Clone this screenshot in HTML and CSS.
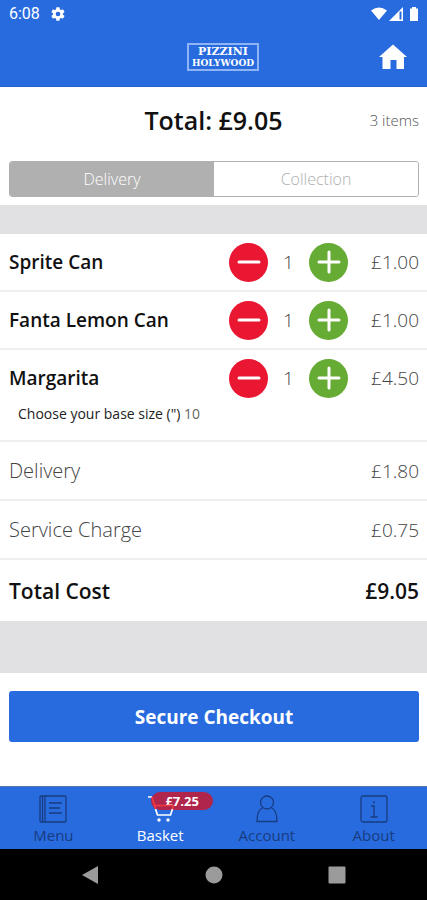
FILE: index.html
```html
<!DOCTYPE html>
<html lang="en">
<head>
    <meta charset="UTF-8">
    <meta name="viewport" content="width=device-width, initial-scale=1.0">
    <title>Basket | Pizzini Holywood</title>
    <link rel="stylesheet" href="styles.css">
</head>
<body>
    <header class="header">
        <div class="status-bar">
            <span class="time">6:08</span>
            <svg class="gear" viewBox="0 0 24 24" width="16" height="16"><path fill="#fff" d="M19.4 13a7.5 7.5 0 0 0 0-2l2.1-1.6a.5.5 0 0 0 .1-.7l-2-3.4a.5.5 0 0 0-.6-.2l-2.5 1a7.3 7.3 0 0 0-1.7-1l-.4-2.6a.5.5 0 0 0-.5-.5h-4a.5.5 0 0 0-.5.5L9 5.1a7.3 7.3 0 0 0-1.7 1l-2.5-1a.5.5 0 0 0-.6.2l-2 3.4a.5.5 0 0 0 .1.7L4.5 11a7.5 7.5 0 0 0 0 2l-2.2 1.6a.5.5 0 0 0-.1.7l2 3.4c.1.2.4.3.6.2l2.5-1a7.3 7.3 0 0 0 1.7 1l.4 2.6c0 .3.2.5.5.5h4c.3 0 .5-.2.5-.5l.4-2.6a7.3 7.3 0 0 0 1.7-1l2.5 1c.2.1.5 0 .6-.2l2-3.4a.5.5 0 0 0-.1-.7zM12 15.500a3.5 3.5 0 1 1 0-7 3.5 3.5 0 0 1 0 7z"/></svg>
            <svg class="signals" viewBox="0 0 50 16" width="50" height="16">
                <path fill="#fff" d="M0 4.500Q8 -1.500 16 4.500L8 14z"/>
                <path fill="#fff" d="M32 1v14H18z"/>
                <path fill="#286bdf" d="M28.500 5.500h2v8h-2z"/>
                <path fill="#fff" d="M41 1h4v1.500h2V15h-8V2.500h2z"/>
            </svg>
        </div>
        <div class="toolbar">
            <div class="logo">
                <span class="logo-top">PIZZINI</span>
                <span class="logo-bottom">HOLYWOOD</span>
            </div>
            <a href="#" class="home" aria-label="Home">
                <svg viewBox="0 0 28 26" width="28" height="26"><path fill="#fff" d="M14 .5 28 13h-3v12h-7.500v-9h-6v9H3.500V13H0z"/></svg>
            </a>
        </div>
    </header>

    <main class="basket">
        <div class="summary">
            <h1>Total: £9.05</h1>
            <span class="count">3 items</span>
        </div>

        <div class="toggle">
            <button class="active" aria-pressed="true">Delivery</button>
            <button aria-pressed="false">Collection</button>
        </div>

        <div class="band"></div>

        <div class="item">
            <div class="row">
                <span class="name">Sprite Can</span>
                <button class="round minus" aria-label="Remove one Sprite Can"><svg viewBox="0 0 24 24" width="24" height="24"><path d="M2 12h20"/></svg></button>
                <span class="qty">1</span>
                <button class="round plus" aria-label="Add one Sprite Can"><svg viewBox="0 0 24 24" width="24" height="24"><path d="M2 12h20M12 2v20"/></svg></button>
                <span class="price">£1.00</span>
            </div>
        </div>
        <div class="item">
            <div class="row">
                <span class="name">Fanta Lemon Can</span>
                <button class="round minus" aria-label="Remove one Fanta Lemon Can"><svg viewBox="0 0 24 24" width="24" height="24"><path d="M2 12h20"/></svg></button>
                <span class="qty">1</span>
                <button class="round plus" aria-label="Add one Fanta Lemon Can"><svg viewBox="0 0 24 24" width="24" height="24"><path d="M2 12h20M12 2v20"/></svg></button>
                <span class="price">£1.00</span>
            </div>
        </div>
        <div class="item">
            <div class="row">
                <span class="name">Margarita</span>
                <button class="round minus" aria-label="Remove one Margarita"><svg viewBox="0 0 24 24" width="24" height="24"><path d="M2 12h20"/></svg></button>
                <span class="qty">1</span>
                <button class="round plus" aria-label="Add one Margarita"><svg viewBox="0 0 24 24" width="24" height="24"><path d="M2 12h20M12 2v20"/></svg></button>
                <span class="price">£4.50</span>
            </div>
            <p class="option">Choose your base size (") <span>10</span></p>
        </div>

        <div class="charge"><span>Delivery</span><span class="price">£1.80</span></div>
        <div class="charge"><span>Service Charge</span><span class="price">£0.75</span></div>
        <div class="charge total"><span>Total Cost</span><span>£9.05</span></div>

        <div class="band band-large"></div>

        <button class="checkout">Secure Checkout</button>
    </main>

    <nav class="tabs">
        <a href="#">
            <svg viewBox="0 0 28 28" width="28" height="28" fill="none" stroke="#173c80" stroke-width="1.3"><rect x="1" y="1" width="26" height="26" rx="1"/><path d="M3.500 1v26M6 1v26M10 8h13M10 13h11M10 18h13"/></svg>
            <span>Menu</span>
        </a>
        <a href="#" class="active">
            <svg viewBox="0 0 28 28" width="28" height="28" fill="none" stroke="#fff" stroke-width="1.7"><path d="M2 2h4M9.500 14l2 6h13l2-6"/><path stroke="#f03a40" d="M6 2l3.500 12M8 10.500h19.500l-1 3.500"/><circle cx="13" cy="25" r="1.7" fill="#fff" stroke="none"/><circle cx="22" cy="25" r="1.7" fill="#fff" stroke="none"/></svg>
            <span>Basket</span>
            <span class="badge">£7.25</span>
        </a>
        <a href="#">
            <svg viewBox="0 0 28 28" width="28" height="28" fill="none" stroke="#173c80" stroke-width="1.3"><circle cx="14" cy="7.500" r="6.500"/><path d="M9.500 13C5.500 14.500 4 18.500 4 26.500h20c0-8-1.500-12-5.500-13.500"/></svg>
            <span>Account</span>
        </a>
        <a href="#">
            <svg viewBox="0 0 28 28" width="28" height="28" fill="none" stroke="#173c80" stroke-width="1.3"><rect x="1" y="1" width="26" height="26" rx="2"/><path d="M11 11h3v11M10.500 22h7M14 6v2.500"/></svg>
            <span>About</span>
        </a>
    </nav>

    <div class="system-bar">
        <svg viewBox="0 0 18 20" width="18" height="20"><path fill="#9b9b9b" d="M17 1v18L1 10z"/></svg>
        <svg viewBox="0 0 18 18" width="18" height="18"><circle cx="9" cy="9" r="8.500" fill="#9b9b9b"/></svg>
        <svg viewBox="0 0 18 18" width="18" height="18"><rect x=".5" y=".5" width="17" height="17" rx="1" fill="#9b9b9b"/></svg>
    </div>
</body>
</html>
```
FILE: styles.css
```css
* {
    margin: 0;
    padding: 0;
    box-sizing: border-box;
}

body {
    display: flex;
    flex-direction: column;
    min-height: 100vh;
    background: #fff;
    color: #111;
    font-family: 'Open Sans', 'Noto Sans', sans-serif;
    font-size: 19px;
    line-height: 24px;
}

a {
    color: inherit;
    text-decoration: none;
}

button {
    border: none;
    font-family: inherit;
    cursor: pointer;
}

svg {
    display: block;
}

.header {
    background: #286bdf;
    color: #fff;
    border-bottom: 1px solid #2060d0;
}

.status-bar {
    display: flex;
    align-items: center;
    height: 28px;
    padding-left: 9px;
}

.time {
    font-family: Roboto, sans-serif;
    font-size: 16px;
}

.gear {
    margin-left: 10px;
}

.signals {
    margin-left: auto;
    margin-right: 6px;
}

.toolbar {
    display: grid;
    grid-template-columns: 1fr auto 1fr;
    align-items: center;
    height: 58px;
    padding: 0 20px 0 39px;
}

.logo {
    grid-column: 2;
    display: flex;
    flex-direction: column;
    align-items: center;
    width: 72px;
    padding: 1px 0;
    border: 2px solid #8fb4f5;
    font-family: 'DejaVu Serif', serif;
    font-weight: bold;
}

.logo-top {
    font-size: 11px;
    line-height: 12px;
}

.logo-bottom {
    font-size: 9px;
    line-height: 10px;
}

.home {
    justify-self: end;
}

.summary {
    display: grid;
    grid-template-columns: 1fr auto 1fr;
    align-items: center;
    height: 66px;
    padding: 0 8px;
}

.summary h1 {
    grid-column: 2;
    font-size: 25px;
    font-weight: 600;
}

.count {
    justify-self: end;
    color: #555;
    font-size: 15px;
    font-weight: 300;
}

.toggle {
    display: flex;
    height: 36px;
    margin: 8px 8px 8px 9px;
    border: 1px solid #b0b0b0;
    border-radius: 3px;
    overflow: hidden;
}

.toggle button {
    flex: 1;
    background: #fff;
    color: #b0b0b0;
    font-size: 16px;
    font-weight: 300;
}

.toggle .active {
    background: #b0b0b0;
    color: #fff;
}

.band {
    height: 29px;
    background: #e1e1e3;
}

.band-large {
    height: 52px;
}

.item {
    border-bottom: 2px solid #efefef;
}

.row {
    display: flex;
    align-items: center;
    height: 56px;
    padding: 0 8px 0 9px;
}

.name {
    flex: 1;
    font-weight: 600;
}

.round {
    display: flex;
    align-items: center;
    justify-content: center;
    width: 39px;
    height: 39px;
    border-radius: 50%;
}

.round svg {
    fill: none;
    stroke: #fff;
    stroke-width: 3;
    stroke-linecap: round;
}

.minus {
    background: #ea1733;
}

.plus {
    background: #66ab33;
}

.qty {
    width: 41px;
    color: #444;
    font-weight: 300;
    text-align: center;
}

.price {
    width: 71px;
    color: #444;
    font-size: 19px;
    font-weight: 300;
    text-align: right;
}

.option {
    padding: 0 18px 18px;
    color: #222;
    font-size: 14px;
    line-height: 16px;
}

.option span {
    color: #666;
}

.charge {
    display: flex;
    align-items: center;
    justify-content: space-between;
    height: 59px;
    padding: 0 8px 0 9px;
    border-bottom: 2px solid #efefef;
    color: #444;
    font-size: 20px;
    font-weight: 300;
}

.charge.total {
    height: 61px;
    border-bottom: none;
    color: #111;
    font-size: 21px;
    font-weight: 600;
}

.checkout {
    display: block;
    width: calc(100% - 17px);
    height: 51px;
    margin: 18px 8px 18px 9px;
    border-radius: 3px;
    background: #286bdf;
    color: #fff;
    font-size: 19px;
    font-weight: 700;
}

.tabs {
    display: flex;
    margin-top: auto;
    background: #286bdf;
    border-top: 1px solid #5577a8;
    color: #173c80;
    font-size: 15px;
}

.tabs a {
    position: relative;
    display: flex;
    flex: 1;
    flex-direction: column;
    align-items: center;
    padding: 8px 0 2px;
}

.tabs svg {
    z-index: 1;
}

.tabs span {
    line-height: 24px;
}

.tabs .active {
    color: #fff;
}

.tabs .badge {
    position: absolute;
    top: 5px;
    left: 50%;
    width: 62px;
    margin-left: -9px;
    border-radius: 9px;
    background: #b0254c;
    font-size: 13px;
    font-weight: 700;
    line-height: 18px;
    text-align: center;
}

.system-bar {
    display: flex;
    align-items: center;
    justify-content: space-between;
    height: 51px;
    padding: 0 81px;
    background: #000;
}
```
